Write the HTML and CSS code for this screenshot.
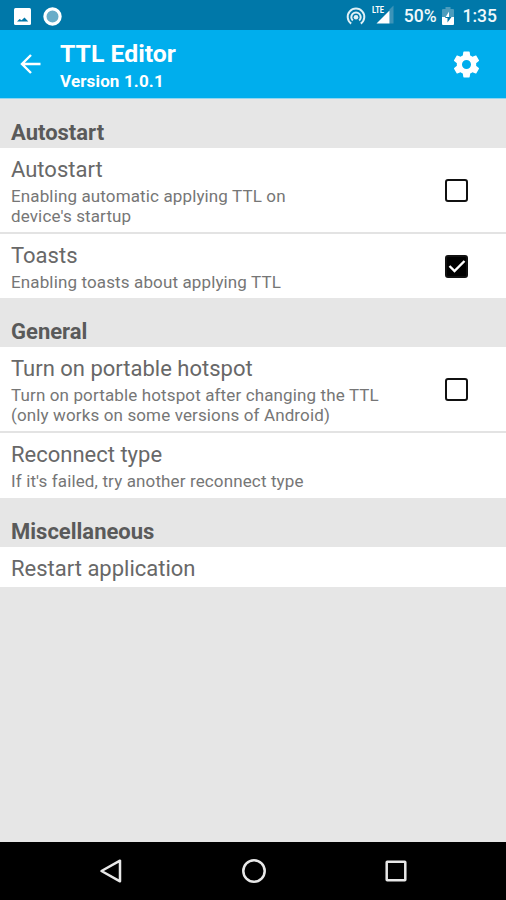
FILE: index.html
```html
<!DOCTYPE html>
<html lang="en">
<head>
<meta charset="utf-8">
<title>TTL Editor</title>
<link rel="stylesheet" href="styles.css">
</head>
<body>
<div class="status">
  <svg class="st-pic" width="17" height="17" viewBox="0 0 17 17"><rect width="17" height="17" rx="1.5" fill="#fff"/><path d="M3 13.500l2.600-2.500 2 1.300L10.500 9.500l3.800 4z" fill="#0078a9"/></svg>
  <svg class="st-ring" width="19" height="19" viewBox="0 0 19 19"><circle cx="9.5" cy="9.5" r="7.600" fill="#69adc8" stroke="#fff" stroke-width="3.200"/></svg>
  <span class="spacer"></span>
  <svg class="st-hot" width="20" height="18" viewBox="0 0 20 18" fill="none" stroke="#e0f0f6" stroke-width="2"><path d="M5.200 16.600A8.300 8.300 0 1 1 14.800 16.600M6.800 13.600A4.700 4.700 0 1 1 13.200 13.600"/><circle cx="10" cy="10.300" r="2.300" fill="#e0f0f6" stroke="none"/></svg>
  <svg class="st-signal" width="23" height="21" viewBox="0 0 23 21"><path d="M17.500 5.500L21.500 1.500V19.500H17.500z" fill="#3c93b8"/><path d="M4.500 19.500L17.500 6.500V19.500z" fill="#fff"/><text class="lte" x="0" y="9" textLength="12" lengthAdjust="spacingAndGlyphs">LTE</text></svg>
  <span class="st-text pct">50%</span>
  <svg class="st-bat" width="12" height="18" viewBox="0 0 12 18"><path d="M3.5 0h5v2H11q1 0 1 1v8H0V3q0-1 1-1h2.500z" fill="#4b9cbd"/><path d="M0 10h12v7q0 1-1 1H1q-1 0-1-1z" fill="#fff"/><path d="M7 4.500L3 11h2.500v4.500L9.500 10H7z" fill="#0078a9"/><path d="M7 4.500L3.600 10H7z" fill="#fff"/></svg>
  <span class="st-text">1:35</span>
</div>
<header class="bar">
  <svg class="back" width="22" height="20" viewBox="0 0 22 20" fill="none" stroke="#fff" stroke-width="2.400"><path d="M20.500 10H2.500M11 1L2 10l9 9"/></svg>
  <div class="heading"><h1>TTL Editor</h1><p>Version 1.0.1</p></div>
  <svg class="gear" width="31" height="31" viewBox="0 0 24 24" fill="#fff"><path d="M19.430 12.980c.04-.32.07-.64.07-.98s-.03-.66-.07-.98l2.110-1.650c.19-.15.24-.42.12-.64l-2-3.460c-.12-.22-.39-.3-.61-.22l-2.490 1c-.52-.4-1.080-.73-1.690-.98l-.38-2.650C14.460 2.180 14.250 2 14 2h-4c-.25 0-.46.18-.49.42l-.38 2.650c-.61.25-1.170.59-1.690.98l-2.490-1c-.23-.09-.49 0-.61.22l-2 3.460c-.13.22-.07.49.12.64l2.110 1.650c-.04.32-.07.65-.07.98s.03.66.07.98l-2.110 1.650c-.19.15-.24.42-.12.64l2 3.460c.12.22.39.3.61.22l2.490-1c.52.4 1.080.73 1.690.98l.38 2.650c.03.24.24.42.49.42h4c.25 0 .46-.18.49-.42l.38-2.650c.61-.25 1.170-.59 1.690-.98l2.490 1c.23.09.49 0 .61-.22l2-3.460c.12-.22.07-.49-.12-.64l-2.110-1.650zM12 15.500a3.500 3.500 0 1 1 0-7 3.500 3.500 0 0 1 0 7z"/></svg>
</header>
<main>
  <h2>Autostart</h2>
  <section>
    <div class="row two"><div><h3>Autostart</h3><p>Enabling automatic applying TTL on<br>device's startup</p></div><span class="check"></span></div>
    <div class="row one"><div><h3>Toasts</h3><p>Enabling toasts about applying TTL</p></div><span class="check on"><svg width="18" height="16" viewBox="0 0 18 16" fill="none" stroke="#fff" stroke-width="2.400"><path d="M1.500 8l5 5L16.500 3"/></svg></span></div>
  </section>
  <h2>General</h2>
  <section>
    <div class="row two"><div><h3>Turn on portable hotspot</h3><p>Turn on portable hotspot after changing the TTL<br>(only works on some versions of Android)</p></div><span class="check"></span></div>
    <div class="row one last"><div><h3>Reconnect type</h3><p>If it's failed, try another reconnect type</p></div></div>
  </section>
  <h2>Miscellaneous</h2>
  <section>
    <div class="row single"><h3>Restart application</h3></div>
  </section>
</main>
<nav>
  <svg width="24" height="26" viewBox="0 0 24 26"><path d="M2.500 13L21 2.700v20.600z"/></svg>
  <svg width="26" height="26" viewBox="0 0 26 26"><circle cx="13" cy="13" r="10.700"/></svg>
  <svg width="24" height="24" viewBox="0 0 24 24"><rect x="2.700" y="2.700" width="18.600" height="18.600" rx=".5"/></svg>
</nav>
</body>
</html>
```

FILE: styles.css
```css
* { box-sizing: border-box; }
body { margin: 0; width: 506px; height: 900px; display: flex; flex-direction: column; background: #e6e6e6; font-family: Roboto, "Liberation Sans", sans-serif; overflow: hidden; }
h1, h2, h3, p { margin: 0; white-space: nowrap; }
svg { display: block; flex: none; }
.status { height: 30px; flex: none; background: #0078a9; display: flex; align-items: center; padding: 2px 9px 0 14px; }
.st-ring { margin-left: 12px; }
.spacer { flex: 1; }
.st-signal { margin: -3px 9px 0 6px; }
.lte { font: 700 9px Roboto, sans-serif; fill: #fff; }
.st-text { color: #f0f8fb; font-size: 17.500px; font-weight: 500; line-height: 26px; }
.st-bat { margin: 0 9px 0 5px; }
.bar { height: 69px; flex: none; background: #00aeed; border-bottom: 1px solid #8fd6f0; display: flex; align-items: center; padding: 0 24px 0 20px; color: #fff; }
.heading { flex: 1; margin-left: 18px; padding-top: 4px; }
h1 { font-size: 24.800px; line-height: 31px; font-weight: 700; }
.heading p { font-size: 17px; line-height: 25px; font-weight: 700; letter-spacing: .15px; }
main { flex: 1; color: #5c5c5c; }
h2 { height: 49px; padding: 20px 11px 0; font-size: 22px; line-height: 27px; font-weight: 700; color: #5a5a5a; }
section { background: #fff; }
.row { display: flex; align-items: center; justify-content: space-between; padding: 0 38px 0 11px; }
.two { height: 86px; padding-top: 1px; border-bottom: 2px solid #e3e3e3; }
.one { height: 64px; }
.two .check { margin-top: -1px; }
.single { height: 40px; padding-top: 2px; }
h3 { font-size: 22px; line-height: 27px; font-weight: 400; color: #686868; }
.row p { font-size: 17px; line-height: 20px; padding-top: 3px; color: #767676; letter-spacing: .13px; }
.one h3 { padding-top: 1px; }
.check { width: 23px; height: 23px; border: 2px solid #111; border-radius: 3px; display: flex; align-items: center; justify-content: center; }
.on { background: #000; }
.last { height: 65px; }
nav { height: 58px; flex: none; background: #000; display: flex; align-items: center; justify-content: space-between; padding: 0 98px 0 99px; }
nav svg { fill: none; stroke: #e8e8e8; stroke-width: 2.5; stroke-linejoin: round; }
```
